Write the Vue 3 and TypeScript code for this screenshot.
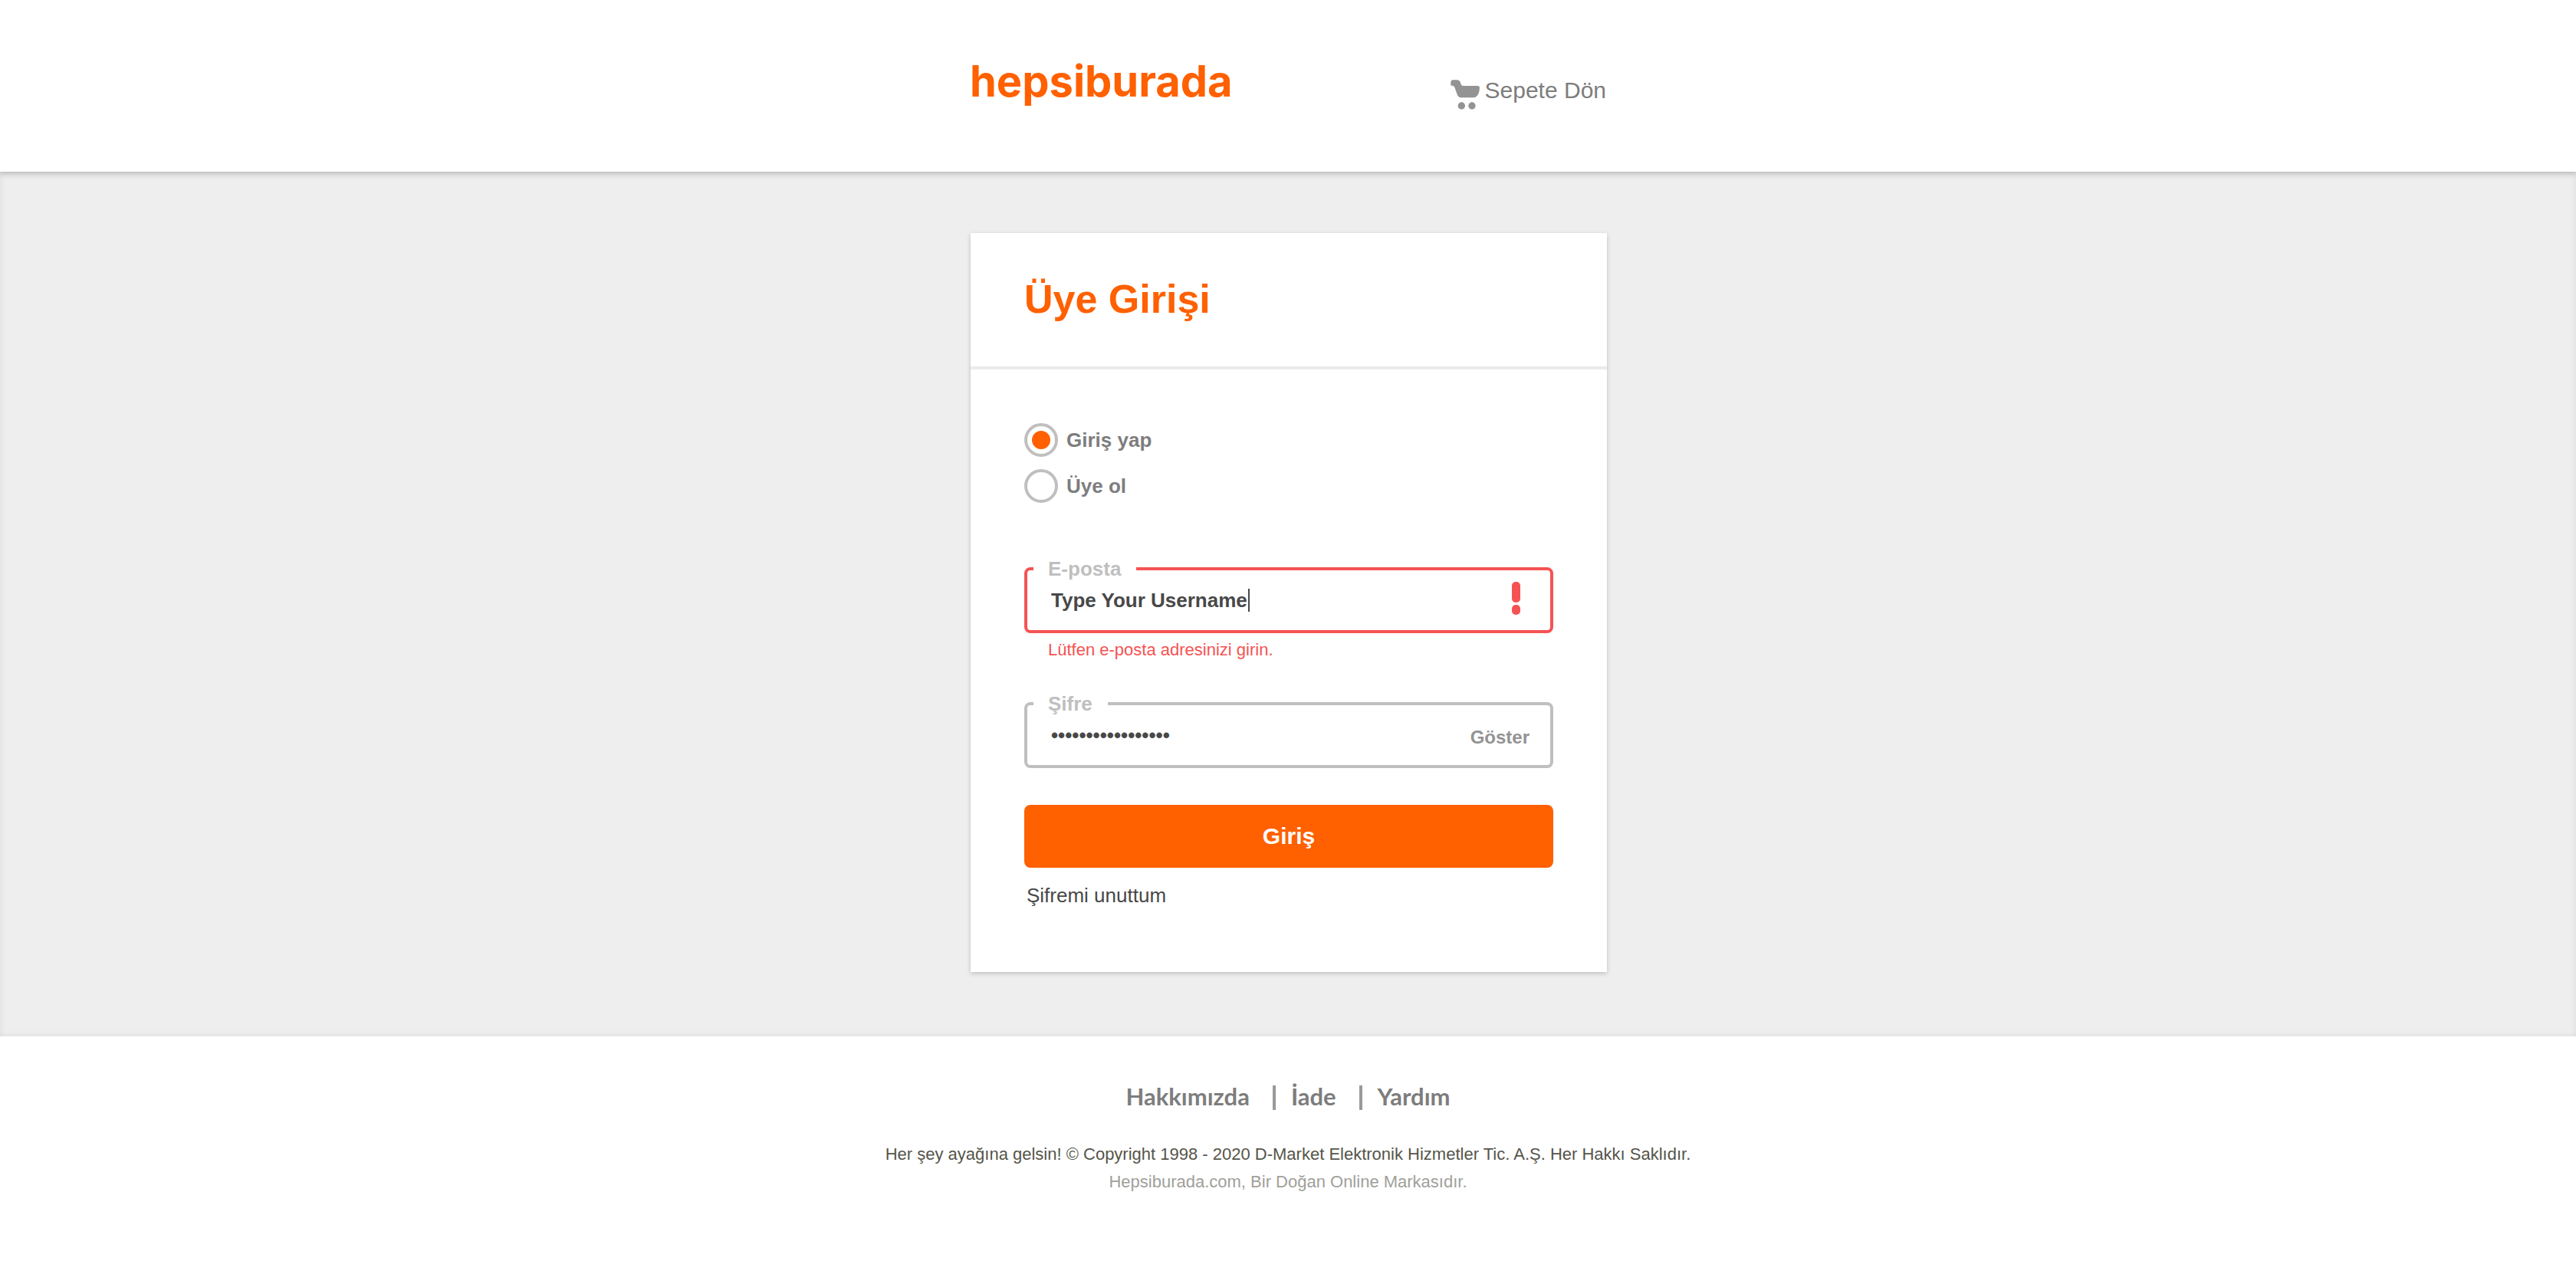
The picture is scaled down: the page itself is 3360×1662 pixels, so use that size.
<script setup lang="ts">
import { ref } from 'vue'

type Mode = 'login' | 'register'

const modes: { id: Mode; label: string }[] = [
  { id: 'login', label: 'Giriş yap' },
  { id: 'register', label: 'Üye ol' },
]
const footerLinks: string[] = ['Hakkımızda', 'İade', 'Yardım']

const mode = ref<Mode>('login')
const email = ref('Type Your Username')
const password = ref('typeyourpassword1')
const passwordVisible = ref(false)
</script>

<template>
  <div class="page">
    <header class="header">
      <div class="header-inner">
        <a class="logo" href="#">hepsiburada</a>
        <a class="cart" href="#">
          <svg class="cart-icon" viewBox="96 102 117 117" aria-hidden="true">
            <path
              d="M104 103H122Q131 103 134 111L137 120Q139 126 145 126H203Q210 127 210 134Q208 171 184 172H136Q126 171 122 160L112 132Q109 125 103 125H99Q97 125 97 122V110Q98 104 104 103Z"
            />
            <circle cx="139" cy="204" r="14" />
            <circle cx="180" cy="204" r="14" />
          </svg>
          <span>Sepete Dön</span>
        </a>
      </div>
    </header>

    <main class="main">
      <section class="card">
        <div class="card-head">
          <h1 class="title">Üye Girişi</h1>
        </div>
        <form class="card-body" @submit.prevent>
          <div class="modes" role="radiogroup" aria-label="Üye Girişi">
            <label v-for="m in modes" :key="m.id" class="mode">
              <input v-model="mode" class="radio" type="radio" name="mode" :value="m.id" />
              <span>{{ m.label }}</span>
            </label>
          </div>

          <fieldset class="field invalid">
            <legend class="legend"><label for="email">E-posta</label></legend>
            <div class="row">
              <input
                id="email"
                v-model="email"
                class="input"
                type="text"
                aria-invalid="true"
                aria-describedby="email-error"
              />
              <span class="caret" aria-hidden="true"></span>
              <svg class="alert" viewBox="0 0 11 43" aria-hidden="true">
                <rect width="11" height="27" rx="5" />
                <rect y="30" width="11" height="13" rx="5" />
              </svg>
            </div>
          </fieldset>
          <p id="email-error" class="error">Lütfen e-posta adresinizi girin.</p>

          <fieldset class="field password">
            <legend class="legend"><label for="password">Şifre</label></legend>
            <div class="row">
              <input
                id="password"
                v-model="password"
                class="input"
                :type="passwordVisible ? 'text' : 'password'"
              />
              <button class="toggle" type="button" @click="passwordVisible = !passwordVisible">
                {{ passwordVisible ? 'Gizle' : 'Göster' }}
              </button>
            </div>
          </fieldset>

          <button class="submit" type="submit">Giriş</button>
          <a class="forgot" href="#">Şifremi unuttum</a>
        </form>
      </section>
    </main>

    <footer class="footer">
      <nav class="footer-nav">
        <a v-for="link in footerLinks" :key="link" class="footer-link" href="#">{{ link }}</a>
      </nav>
      <p class="copyright">
        Her şey ayağına gelsin! © Copyright 1998 - 2020 D-Market Elektronik Hizmetler Tic. A.Ş. Her
        Hakkı Saklıdır.
      </p>
      <p class="brand-note">Hepsiburada.com, Bir Doğan Online Markasıdır.</p>
    </footer>
  </div>
</template>

<style>
body {
  background: #fff;
}
</style>

<style scoped>
.page {
  font-family: 'Liberation Sans', Arial, sans-serif;
  color: #484848;
}
.page *,
.page *::before {
  box-sizing: border-box;
}
a {
  color: inherit;
  text-decoration: none;
}
p,
h1 {
  margin: 0;
}

.header {
  position: relative;
  background: #fff;
  padding: 74px 0 81px;
  box-shadow: 0 2px 8px rgba(0, 0, 0, 0.22);
}
.header-inner {
  display: flex;
  justify-content: space-between;
  align-items: flex-start;
  max-width: 830px;
  margin: 0 auto;
}
.logo {
  font: 700 56px/64px Inter, sans-serif;
  color: #ff6000;
}
.cart {
  display: flex;
  align-items: flex-start;
  gap: 6px;
  padding-top: 26px;
  font-size: 30px;
  line-height: 36px;
  color: #7d7d7d;
}
.cart-icon {
  width: 39px;
  height: 39px;
  margin-top: 4px;
  fill: #939393;
}

.main {
  padding: 80px 0 84px 2px;
  background: #eee;
  box-shadow: inset 0 0 10px rgba(0, 0, 0, 0.08);
}
.card {
  max-width: 830px;
  margin: 0 auto;
  background: #fff;
  box-shadow: 0 2px 6px rgba(0, 0, 0, 0.2);
}
.card-head {
  padding: 56px 70px 58px;
  border-bottom: 4px solid #ebebeb;
}
.title {
  font-size: 52px;
  line-height: 60px;
  color: #ff6000;
}
.card-body {
  padding: 70px 70px 84px;
}

.modes {
  display: flex;
  flex-direction: column;
  align-items: flex-start;
  gap: 16px;
  margin-bottom: 72px;
}
.mode {
  display: flex;
  align-items: center;
  gap: 11px;
  font-size: 26px;
  font-weight: 700;
  line-height: 32px;
  color: #7d7d7d;
}
.radio {
  appearance: none;
  width: 44px;
  height: 44px;
  margin: 0;
  padding: 6px;
  border: 4px solid #bfbfbf;
  border-radius: 50%;
  background: #fff;
}
.radio:checked::before {
  content: '';
  display: block;
  height: 24px;
  border-radius: 50%;
  background: #ff6000;
}

.field {
  min-width: 0;
  margin: 0;
  padding: 0 8px;
  border: 4px solid #bfbfbf;
  border-radius: 8px;
}
.field.invalid {
  border-color: #f55353;
}
.field.password {
  margin: 42px 0 48px;
}
.legend {
  padding: 0 20px 0 19px;
  font-size: 26px;
  font-weight: 700;
  line-height: 28px;
  color: #bfbfbf;
}
.row {
  position: relative;
  display: flex;
  align-items: flex-start;
}
.input {
  flex: 1;
  min-width: 0;
  height: 66px;
  padding: 0 24px 12px 23px;
  border: 0;
  outline: 0;
  background: transparent;
  font: inherit;
  font-size: 26px;
  font-weight: 700;
  color: #484848;
}
.caret {
  position: absolute;
  top: 12px;
  left: 280px;
  width: 2px;
  height: 30px;
  background: #484848;
}
.alert {
  width: 11px;
  height: 43px;
  margin: 3px 31px 0 0;
  fill: #f55353;
}
.toggle {
  height: 60px;
  padding: 0 19px;
  border: 0;
  background: none;
  font: inherit;
  font-size: 24px;
  font-weight: 700;
  color: #939393;
}
.error {
  margin-top: 8px;
  padding-left: 31px;
  font-size: 22px;
  line-height: 28px;
  color: #f55353;
}
.submit {
  display: block;
  width: 100%;
  height: 82px;
  border: 0;
  border-radius: 8px;
  background: #ff6000;
  font: inherit;
  font-size: 30px;
  font-weight: 700;
  color: #fff;
}
.forgot {
  display: block;
  margin-top: 20px;
  padding-left: 3px;
  font-size: 26px;
  line-height: 32px;
}

.footer {
  padding: 64px 0;
  text-align: center;
  font-size: 22px;
  line-height: 36px;
}
.footer-nav {
  display: flex;
  justify-content: center;
  margin-bottom: 40px;
  font: 700 31px/28px Lato, sans-serif;
  color: #7d7d7d;
}
.footer-link {
  padding-bottom: 4px;
}
.footer-link + .footer-link {
  margin-left: 30px;
  padding-left: 20px;
  border-left: 4px solid #999;
}
.copyright {
  color: #55554a;
}
.brand-note {
  color: #a0a09a;
}
</style>
